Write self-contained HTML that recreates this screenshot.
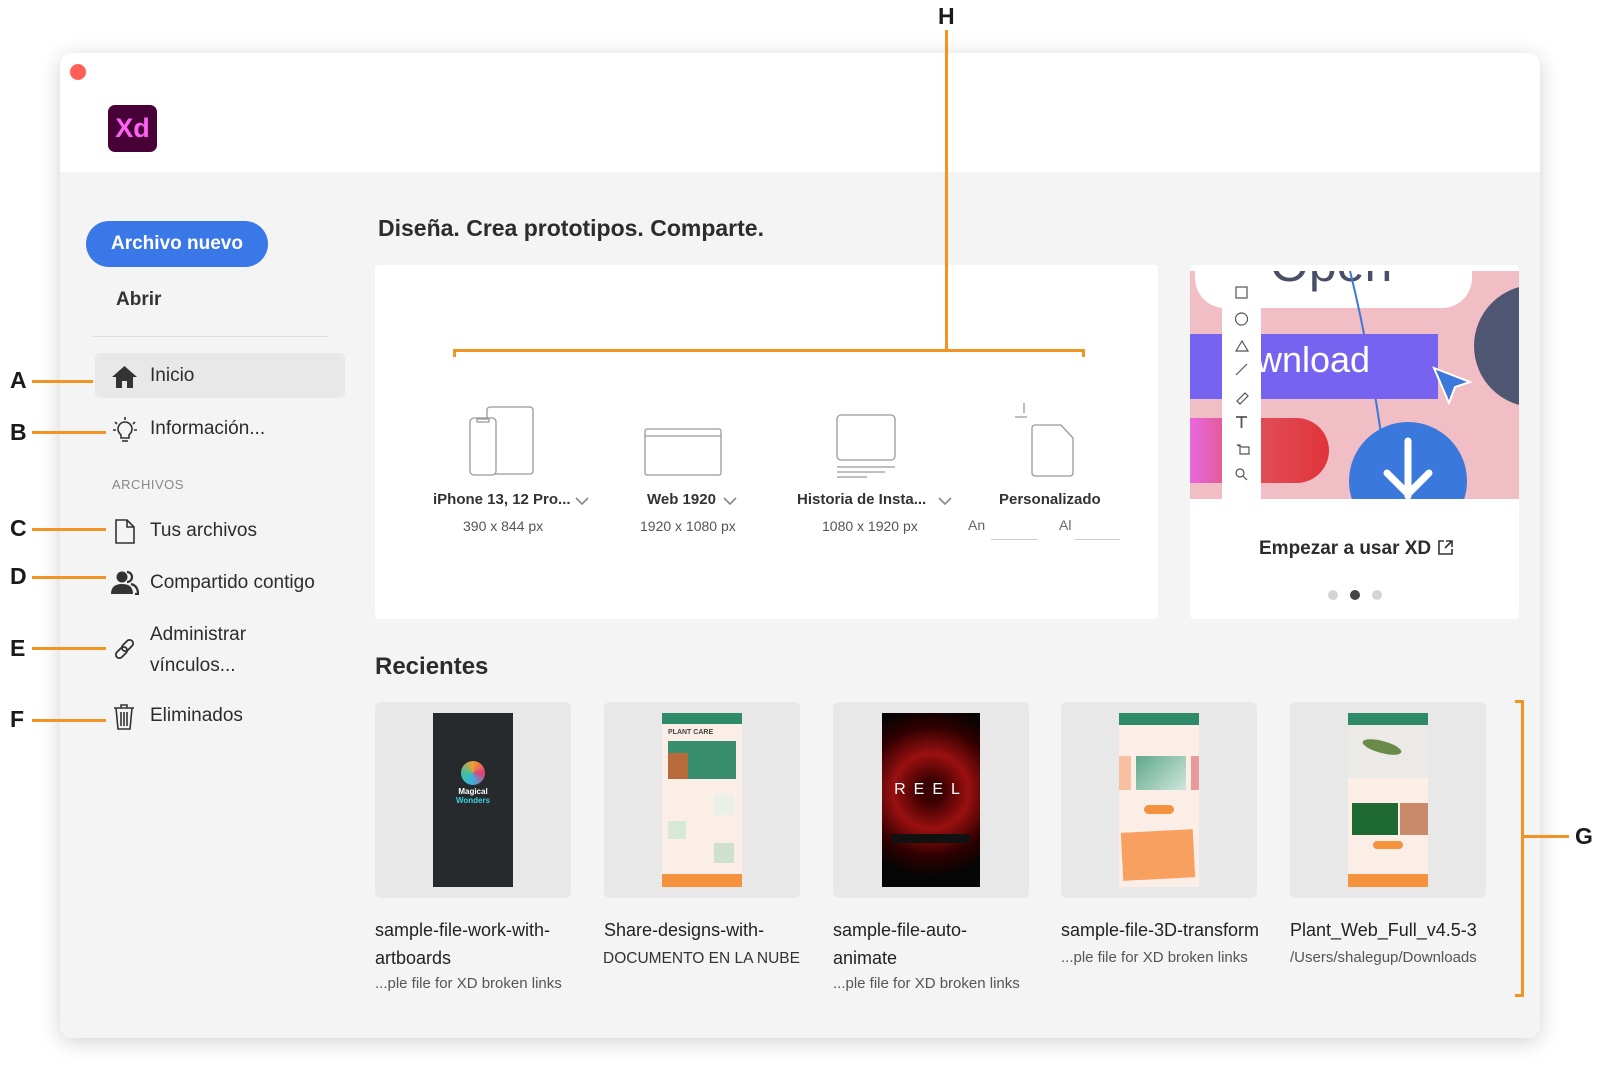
<!DOCTYPE html>
<html><head><meta charset="utf-8"><style>
*{margin:0;padding:0;box-sizing:border-box}
body{width:1600px;height:1079px;background:#fff;position:relative;overflow:hidden;font-family:"Liberation Sans",sans-serif;color:#2c2c2c}
.a{position:absolute}
.win{left:60px;top:53px;width:1480px;height:985px;border-radius:12px;background:#f4f4f4;box-shadow:0 4px 22px rgba(0,0,0,.18);overflow:hidden}
.lbl{font-weight:bold;font-size:23px;color:#1a1a1a}
.ol{background:#f29423;height:3px}
.nav{font-size:19px;color:#2c2c2c}
.t{white-space:nowrap}
.name{font-size:18px;color:#222}
.sub{font-size:15px;color:#555}
.thumb{width:196px;height:196px;background:#e8e8e8;border-radius:6px}
</style></head><body>
<div class="a win">
 <div class="a" style="left:0;top:0;width:1480px;height:119px;background:#fff"></div>
</div>
<div class="a" style="left:70px;top:64px;width:16px;height:16px;border-radius:50%;background:#fe5f57"></div>
<div class="a" style="left:108px;top:105px;width:49px;height:47px;border-radius:7px;background:#470137;color:#ff61f6;font-weight:bold;font-size:27px;text-align:center;line-height:47px">Xd</div>

<!-- sidebar -->
<div class="a" style="left:86px;top:221px;width:182px;height:46px;border-radius:23px;background:#3b78e7;color:#fff;font-weight:bold;font-size:19px;text-align:center;line-height:46px">Archivo nuevo</div>
<div class="a t" style="left:116px;top:289px;font-size:19px;font-weight:bold;color:#333">Abrir</div>
<div class="a" style="left:93px;top:336px;width:235px;height:1px;background:#ddd"></div>
<div class="a" style="left:95px;top:353px;width:250px;height:45px;border-radius:5px;background:#e8e8e8"></div>
<svg class="a" style="left:111px;top:365px" width="27" height="24" viewBox="0 0 27 24"><path d="M13.5 1 L1 12 h4 v11 h6 v-7 h5 v7 h6 v-11 h4 z" fill="#333"/></svg>
<div class="a t nav" style="left:150px;top:365px">Inicio</div>
<svg class="a" style="left:112px;top:416px" width="26" height="28" viewBox="0 0 26 28" fill="none" stroke="#333" stroke-width="1.6"><path d="M13 1v3M3 6l2 2M23 6l-2 2M1 14h3M22 14h3"/><path d="M9 19c-2-2-3-4-3-6a7 7 0 0 1 14 0c0 2-1 4-3 6v3H9z"/><path d="M10 25h6"/></svg>
<div class="a t nav" style="left:150px;top:418px">Información...</div>
<div class="a t" style="left:112px;top:477px;font-size:13px;color:#888;letter-spacing:.5px">ARCHIVOS</div>
<svg class="a" style="left:115px;top:519px" width="20" height="25" viewBox="0 0 20 25" fill="none" stroke="#333" stroke-width="1.6"><path d="M1 1h11l7 7v16H1z M12 1v7h7"/></svg>
<div class="a t nav" style="left:150px;top:520px">Tus archivos</div>
<svg class="a" style="left:111px;top:570px" width="28" height="25" viewBox="0 0 28 25"><circle cx="11" cy="7" r="5.5" fill="#333"/><path d="M0 24c0-7 4-10 11-10s11 3 11 10z" fill="#333"/><path d="M16 2a5 5 0 0 1 0 10M20 14c4 1 7 4 7 10h-3" stroke="#333" stroke-width="2.2" fill="none"/></svg>
<div class="a t nav" style="left:150px;top:572px">Compartido contigo</div>
<svg class="a" style="left:112px;top:636px" width="26" height="26" viewBox="0 0 26 26" fill="none" stroke="#333" stroke-width="1.8"><rect x="12" y="3" width="7" height="13" rx="3.5" transform="rotate(45 15.5 9.5)"/><rect x="6" y="10" width="7" height="13" rx="3.5" transform="rotate(45 9.5 16.5)"/></svg>
<div class="a t nav" style="left:150px;top:624px">Administrar</div>
<div class="a t nav" style="left:150px;top:655px">vínculos...</div>
<svg class="a" style="left:113px;top:704px" width="22" height="26" viewBox="0 0 22 26" fill="none" stroke="#333" stroke-width="1.6"><path d="M1 4h20M8 4V1h6v3M3 4l2 21h12l2-21M8 8v14M11 8v14M14 8v14"/></svg>
<div class="a t nav" style="left:150px;top:705px">Eliminados</div>

<!-- labels A-F -->
<div class="a lbl" style="left:10px;top:367px">A</div><div class="a ol" style="left:32px;top:380px;width:61px"></div>
<div class="a lbl" style="left:10px;top:419px">B</div><div class="a ol" style="left:32px;top:431px;width:74px"></div>
<div class="a lbl" style="left:10px;top:515px">C</div><div class="a ol" style="left:32px;top:528px;width:74px"></div>
<div class="a lbl" style="left:10px;top:563px">D</div><div class="a ol" style="left:32px;top:576px;width:74px"></div>
<div class="a lbl" style="left:10px;top:635px">E</div><div class="a ol" style="left:32px;top:647px;width:74px"></div>
<div class="a lbl" style="left:10px;top:706px">F</div><div class="a ol" style="left:32px;top:719px;width:74px"></div>

<!-- main -->
<div class="a t" style="left:378px;top:215px;font-size:23px;font-weight:bold;color:#2c2c2c">Diseña. Crea prototipos. Comparte.</div>
<div class="a" style="left:375px;top:265px;width:783px;height:354px;background:#fff;border-radius:4px"></div>

<!-- H -->
<div class="a lbl" style="left:938px;top:3px">H</div>
<div class="a" style="left:945px;top:30px;width:3px;height:322px;background:#f29423"></div>
<div class="a" style="left:453px;top:349px;width:632px;height:3px;background:#f29423"></div>
<div class="a" style="left:453px;top:349px;width:3px;height:8px;background:#f29423"></div>
<div class="a" style="left:1082px;top:349px;width:3px;height:8px;background:#f29423"></div>

<svg class="a" style="left:375px;top:395px" width="783" height="90" viewBox="0 0 783 90" fill="none" stroke="#999" stroke-width="1.3">
 <rect x="112" y="12" width="46" height="67" rx="3"/><rect x="95" y="23" width="26" height="57" rx="4" fill="#fff"/><path d="M102 24h12v3h-12z"/>
 <rect x="270" y="34" width="76" height="46" rx="2"/><path d="M270 41h76"/>
 <rect x="462" y="20" width="58" height="45" rx="4"/><path d="M462 72h58M462 77h48M462 82h30"/>
 <path d="M660 30h26l12 13v35a3 3 0 0 1-3 3h-35a3 3 0 0 1-3-3v-45a3 3 0 0 1 3-3z"/><path d="M640 22h12M649 8v10"/>
</svg>
<div class="a t" style="left:433px;top:491px;font-size:15px;font-weight:bold;color:#333">iPhone 13, 12 Pro...</div>
<div class="a t" style="left:463px;top:518px;font-size:14px;color:#555">390 x 844 px</div>
<div class="a t" style="left:647px;top:491px;font-size:15px;font-weight:bold;color:#333">Web 1920</div>
<div class="a t" style="left:640px;top:518px;font-size:14px;color:#555">1920 x 1080 px</div>
<div class="a t" style="left:797px;top:491px;font-size:15px;font-weight:bold;color:#333">Historia de Insta...</div>
<div class="a t" style="left:822px;top:518px;font-size:14px;color:#555">1080 x 1920 px</div>
<div class="a t" style="left:999px;top:491px;font-size:15px;font-weight:bold;color:#333">Personalizado</div>
<svg class="a" style="left:575px;top:496px" width="380" height="12" viewBox="0 0 380 12" fill="none" stroke="#888" stroke-width="1.6"><path d="M1 2l6 6 6-6M149 2l6 6 6-6M364 2l6 6 6-6"/></svg>
<div class="a t" style="left:968px;top:517px;font-size:14px;color:#666">An</div>
<div class="a t" style="left:1059px;top:517px;font-size:14px;color:#666">Al</div>
<div class="a" style="left:991px;top:539px;width:47px;height:1px;background:#ccc"></div>
<div class="a" style="left:1075px;top:539px;width:45px;height:1px;background:#ccc"></div>

<!-- promo -->
<div class="a" style="left:1190px;top:265px;width:329px;height:354px;background:#fff;border-radius:4px"></div>
<div class="a" style="left:1190px;top:271px;width:329px;height:228px;background:#f2bec6;overflow:hidden">
 <div class="a" style="left:5px;top:-40px;width:277px;height:77px;background:#fff;border-radius:30px"></div>
 <div class="a t" style="left:80px;top:-36px;font-size:50px;color:#4a4f66">Open</div>
 <svg class="a" style="left:0;top:0" width="329" height="228"><path d="M160 0 C175 60 185 120 195 190 S215 228 240 228" stroke="#3a78dc" stroke-width="2" fill="none"/></svg>
 <div class="a" style="left:0;top:63px;width:248px;height:65px;background:#7664f0"></div>
 <div class="a t" style="left:66px;top:68px;font-size:36px;color:#fff">wnload</div>
 <div class="a" style="left:284px;top:14px;width:122px;height:122px;border-radius:50%;background:#4f5672"></div>
 <div class="a" style="left:0;top:147px;width:139px;height:65px;border-radius:0 33px 33px 0;background:linear-gradient(90deg,#e868e0,#e0505a 45%,#e0343a)"></div>
 <div class="a" style="left:159px;top:151px;width:118px;height:118px;border-radius:50%;background:#3a78dc"></div>
 <svg class="a" style="left:185px;top:160px" width="66" height="68" fill="none" stroke="#fff" stroke-width="7" stroke-linecap="round"><path d="M33 10v55M12 42l21 21 21-21"/></svg>
 <svg class="a" style="left:240px;top:93px" width="45" height="45"><path d="M4 4l36 14-15 5-6 16z" fill="#3a78dc" stroke="#fff" stroke-width="2"/></svg>
 <div class="a" style="left:32px;top:0;width:39px;height:228px;background:#fff"></div>
 <svg class="a" style="left:32px;top:0" width="39" height="228" fill="none" stroke="#555" stroke-width="1.2"><rect x="14" y="16" width="11" height="11"/><circle cx="19.5" cy="48" r="6"/><path d="M14 80l6-10 6 10z M14 104l11-11"/><path d="M15 130l8-8 3 3-8 8z"/><path d="M14 146h11M19.5 146v11" stroke-width="1.8"/><path d="M15 174h3v9h9v-7h-7z"/><circle cx="18" cy="202" r="4"/><path d="M21 205l4 4"/></svg>
</div>
<div class="a t" style="left:1259px;top:538px;font-size:19px;font-weight:bold;color:#2c2c2c">Empezar a usar XD</div>
<svg class="a" style="left:1437px;top:539px" width="17" height="17" fill="none" stroke="#333" stroke-width="1.6"><path d="M7 2H2v13h13v-5M9 2h6v6M15 2l-7 7"/></svg>
<div class="a" style="left:1328px;top:590px;width:10px;height:10px;border-radius:50%;background:#d4d4d4"></div>
<div class="a" style="left:1350px;top:590px;width:10px;height:10px;border-radius:50%;background:#444"></div>
<div class="a" style="left:1372px;top:590px;width:10px;height:10px;border-radius:50%;background:#d4d4d4"></div>

<!-- Recientes -->
<div class="a t" style="left:375px;top:653px;font-size:24px;font-weight:bold;color:#2c2c2c">Recientes</div>

<div class="a thumb" style="left:375px;top:702px"><div class="a" style="left:58px;top:11px;width:80px;height:174px;background:#262a2c">
 <div class="a" style="left:28px;top:48px;width:24px;height:24px;border-radius:50%;background:conic-gradient(#f0a030,#e0407a,#3ab0e0,#40c0a0,#f0a030)"></div>
 <div class="a t" style="left:0;top:74px;width:80px;text-align:center;font-size:8px;font-weight:bold;color:#fff;line-height:9px">Magical<br><span style="color:#3cd0e0">Wonders</span></div>
</div></div>
<div class="a thumb" style="left:604px;top:702px"><div class="a" style="left:58px;top:11px;width:80px;height:174px;background:#fbeee6">
 <div class="a" style="left:0;top:0;width:80px;height:11px;background:#2f8a6a"></div>
 <div class="a t" style="left:6px;top:16px;font-size:7px;font-weight:bold;color:#444">PLANT CARE</div>
 <div class="a" style="left:6px;top:28px;width:68px;height:38px;background:#3a8e70"></div>
 <div class="a" style="left:6px;top:40px;width:20px;height:26px;background:#b86a3a"></div>
 <div class="a" style="left:52px;top:82px;width:20px;height:20px;background:#e8f0e8"></div>
 <div class="a" style="left:6px;top:108px;width:18px;height:18px;background:#d8e8d8"></div>
 <div class="a" style="left:52px;top:130px;width:20px;height:20px;background:#cfe0cf"></div>
 <div class="a" style="left:0;top:161px;width:80px;height:13px;background:#f5923e"></div>
</div></div>
<div class="a thumb" style="left:833px;top:702px"><div class="a" style="left:49px;top:11px;width:98px;height:174px;background:radial-gradient(circle at 50% 45%,#3a0000 10%,#9a1010 35%,#300000 60%,#050505 80%)">
 <div class="a t" style="left:0;top:68px;width:98px;text-align:center;font-size:16px;color:#fff;letter-spacing:8px">REEL</div>
 <div class="a" style="left:10px;top:121px;width:78px;height:9px;background:#111"></div>
</div></div>
<div class="a thumb" style="left:1061px;top:702px"><div class="a" style="left:58px;top:11px;width:80px;height:174px;background:#fbeee6">
 <div class="a" style="left:0;top:0;width:80px;height:12px;background:#2f8a6a"></div>
 <div class="a" style="left:17px;top:43px;width:50px;height:34px;background:linear-gradient(135deg,#5fa88a,#cfe6dc)"></div>
 <div class="a" style="left:0;top:43px;width:12px;height:34px;background:#f8c0a0"></div>
 <div class="a" style="left:72px;top:43px;width:8px;height:34px;background:#e89a9a"></div>
 <div class="a" style="left:25px;top:92px;width:30px;height:9px;border-radius:5px;background:#f5923e"></div>
 <div class="a" style="left:3px;top:118px;width:72px;height:48px;background:#f8a060;transform:rotate(-3deg)"></div>
</div></div>
<div class="a thumb" style="left:1290px;top:702px"><div class="a" style="left:58px;top:11px;width:80px;height:174px;background:#fbeee6">
 <div class="a" style="left:0;top:0;width:80px;height:12px;background:#2f8a6a"></div>
 <div class="a" style="left:0;top:12px;width:80px;height:53px;background:#eceae6"></div>
 <div class="a" style="left:14px;top:28px;width:40px;height:12px;border-radius:50%;background:#6a8a4a;transform:rotate(15deg)"></div>
 <div class="a" style="left:4px;top:90px;width:46px;height:32px;background:#1f6a32"></div>
 <div class="a" style="left:52px;top:90px;width:28px;height:32px;background:#c88a6a"></div>
 <div class="a" style="left:25px;top:128px;width:30px;height:8px;border-radius:4px;background:#f5923e"></div>
 <div class="a" style="left:0;top:161px;width:80px;height:13px;background:#f5923e"></div>
</div></div>

<div class="a t name" style="left:375px;top:920px">sample-file-work-with-</div>
<div class="a t name" style="left:375px;top:948px">artboards</div>
<div class="a t sub" style="left:375px;top:975px">...ple file for XD broken links</div>
<div class="a t name" style="left:604px;top:920px">Share-designs-with-</div>
<div class="a t sub" style="left:603px;top:950px;font-size:15.5px;color:#333">DOCUMENTO EN LA NUBE</div>
<div class="a t name" style="left:833px;top:920px">sample-file-auto-</div>
<div class="a t name" style="left:833px;top:948px">animate</div>
<div class="a t sub" style="left:833px;top:975px">...ple file for XD broken links</div>
<div class="a t name" style="left:1061px;top:920px">sample-file-3D-transform</div>
<div class="a t sub" style="left:1061px;top:949px">...ple file for XD broken links</div>
<div class="a t name" style="left:1290px;top:920px">Plant_Web_Full_v4.5-3</div>
<div class="a t sub" style="left:1290px;top:949px">/Users/shalegup/Downloads</div>

<!-- G -->
<div class="a" style="left:1521px;top:700px;width:3px;height:297px;background:#f29423"></div>
<div class="a" style="left:1515px;top:700px;width:8px;height:3px;background:#f29423"></div>
<div class="a" style="left:1515px;top:994px;width:8px;height:3px;background:#f29423"></div>
<div class="a" style="left:1523px;top:835px;width:46px;height:3px;background:#f29423"></div>
<div class="a lbl" style="left:1575px;top:823px">G</div>
</body></html>
